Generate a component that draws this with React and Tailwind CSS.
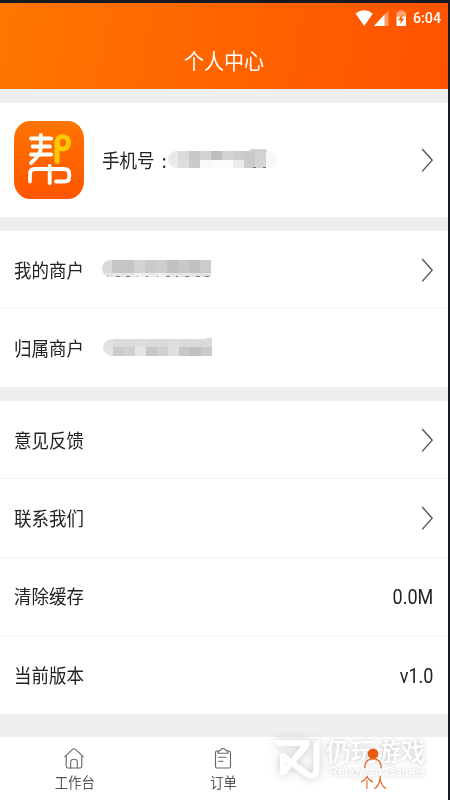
const ORANGE = '#e65a14'

const phoneMask = [
  ['#e9e9e9', '#dadada', '#c8c8c8', '#d3d3d3', '#bfbfbf', '#d2d2d2', '#cdcdcd', '#c9c9c9', '#d4d4d4', '#f8f8f8'],
  ['#ececec', '#dedede', '#cbcbcb', '#f9f9f9', '#fbfbfb', '#fbfbfb', '#ebebeb', '#cccccc', '#d4d4d4', '#f8f8f8'],
]

const merchantMask = [
  ['#dadada', '#c5c5c5', '#c5c5c5', '#d3d3d3', '#cacaca', '#cecece', '#c2c2c2', '#c8c8c8', '#c1c1c1', '#cccccc'],
  ['#e2e2e2', '#e6e6e6', '#e6e6e6', '#eeeeee', '#eaeaea', '#eeeeee', '#e6e6e6', '#e6e6e6', '#e3e3e3', '#e1e1e1'],
]

const ownerMask = [
  ['#e2e2e2', '#dbdbdb', '#dbdbdb', '#dedede', '#dadada', '#dadada', '#dedede', '#dadada', '#dbdbdb', '#d9d9d9'],
  ['#e4e4e4', '#cbcbcb', '#d0d0d0', '#e5e5e5', '#c7c7c7', '#d0d0d0', '#dfdfdf', '#c7c7c7', '#c1c1c1', '#cacaca'],
]

function Mask({ rows, heights, className }) {
  return (
    <div className={`overflow-hidden ${className}`}>
      {rows.map((row, i) => (
        <div key={i} className={`flex ${heights[i]}`}>
          {row.map((color, j) => (
            <span
              key={j}
              className={j === 0 ? 'w-[10px]' : 'w-[11px]'}
              style={{ background: color }}
            />
          ))}
        </div>
      ))}
    </div>
  )
}

// 数字底部露出的小点
function Dots({ className, items }) {
  return (
    <svg className={`absolute h-[2px] w-[110px] ${className}`} viewBox="0 0 110 2">
      {items.map(([x, w]) => (
        <rect key={x} x={x} y="0" width={w} height="1" fill="#555" opacity="0.75" />
      ))}
    </svg>
  )
}

function Chevron() {
  return (
    <svg className="h-[24px] w-[12px]" viewBox="0 0 12 24" fill="none" stroke="#555" strokeWidth="1.4">
      <path d="M1.2 1L11.2 12.2L1.2 23.4" />
    </svg>
  )
}

function Label({ children }) {
  return (
    <span className="w-[88px] shrink-0 origin-left scale-x-[.92] whitespace-nowrap text-[19px] leading-[28px]">
      {children}
    </span>
  )
}

function Row({ label, children, border }) {
  return (
    <div className={`flex h-[78.25px] items-center pl-[14px] pr-[15px] ${border ? 'border-b border-[#f5f5f5]' : ''}`}>
      <Label>{label}</Label>
      {children}
    </div>
  )
}

function Value({ children }) {
  return (
    <span className="ml-auto origin-right scale-x-[.9] pt-[2px] font-[Roboto] text-[20px] leading-[28px]">
      {children}
    </span>
  )
}

function Logo() {
  return (
    <svg className="h-[78px] w-[70px] shrink-0" viewBox="0 0 70 78" fill="none" strokeLinecap="round" strokeLinejoin="round">
      <defs>
        <linearGradient id="logo" x1="0" y1="0" x2="0" y2="1">
          <stop offset="0" stopColor="#ff7400" />
          <stop offset="1" stopColor="#ff5500" />
        </linearGradient>
      </defs>
      <rect width="70" height="78" rx="16" ry="18" fill="url(#logo)" />
      <g stroke="#fff" strokeWidth="3.8">
        <path d="M17 17.5H37.2M18.5 25.5H36M17 33.5H37.2" />
        <path d="M26.8 14V27Q26.8 33.500 17 42" />
        <path d="M16 60.500V53Q16 48 21 48H50Q55.300 48 55.300 53V55.500Q55.300 60.500 50.500 60.500H42" />
        <path d="M35.700 45V62" />
      </g>
      <g stroke="#ffc800" strokeWidth="5">
        <ellipse cx="48.800" cy="21.700" rx="5.800" ry="6.200" />
        <path d="M43 21.700V40.500" />
      </g>
    </svg>
  )
}

function StatusBar() {
  return (
    <div className="flex h-[30px] items-center justify-end pr-[7px]">
      <svg className="h-[17px] w-[52px]" viewBox="0 0 52 17" fill="#fff">
        <path d="M0.500 3.500Q9 -2.800 17.800 3.500L9.200 16Z" />
        <path d="M33.500 0.500V16H19Z" opacity="0.4" />
        <path d="M29.500 4.500V16H19Z" />
        <path d="M41.500 2H44V0.500H48.500V2H51V6.500H41.500Z" opacity="0.45" />
        <path d="M41.500 6.500H51V16H41.500Z" />
        <path d="M47.500 4L43 10.200H45.700L45 14L49.300 8.500H46.700Z" fill="#ff5f00" />
      </svg>
      <span className="ml-[6px] w-[28px] origin-left scale-x-[.92] font-[Roboto] text-[15.5px] font-medium leading-[18px] text-white">
        6:04
      </span>
    </div>
  )
}

function HomeIcon() {
  return (
    <svg className="-ml-px h-[21px] w-[20px]" viewBox="0 0 20 21" fill="none" stroke="#666" strokeWidth="1.100" strokeLinejoin="round" strokeLinecap="round">
      <path d="M0.800 8.700L8.800 1.200Q10 0.200 11.200 1.200L19.200 8.700" />
      <path d="M2.200 8V18.200Q2.200 20 4 20H16Q17.800 20 17.800 18.200V8" />
      <path d="M6.700 20V14Q6.700 11.300 10 11.300Q13.300 11.300 13.300 14V20" />
    </svg>
  )
}

function OrderIcon() {
  return (
    <svg className="-ml-px h-[21px] w-[20px]" viewBox="0 0 20 21" fill="none" stroke="#666" strokeWidth="1.100" strokeLinejoin="round" strokeLinecap="round">
      <path d="M5 3H4Q2.500 3 2.500 4.500V18.500Q2.500 20 4 20H16Q17.500 20 17.500 18.500V4.500Q17.500 3 16 3H15" />
      <path d="M5 5.300Q4.800 2.500 7.500 2.200Q8 0.600 10 0.600Q12 0.600 12.500 2.200Q15.200 2.500 15 5.300Z" />
      <path d="M5.500 9.200H13M5.500 13.200H10" />
    </svg>
  )
}

function UserIcon() {
  return (
    <svg className="h-[21px] w-[20px]" viewBox="0 0 20 21" fill="none">
      <circle cx="10" cy="5.700" r="5.300" fill={ORANGE} />
      <path d="M1.800 20.200C1.800 14 5 10.800 10 10.800C15 10.800 18.200 14 18.200 20.200" stroke={ORANGE} strokeWidth="1.200" />
    </svg>
  )
}

function Tab({ icon, label, active }) {
  return (
    <div className={`flex flex-1 flex-col items-center pt-[11px] ${active ? 'relative z-10 text-[#e65a14]' : 'text-[#555]'}`}>
      {icon}
      <span className="mt-[3px] scale-x-[.92] text-[14.5px] leading-[20px]">{label}</span>
    </div>
  )
}

function Watermark() {
  return (
    <div className="absolute left-[275px] top-[735px] flex text-white">
      <svg
        className="mt-px h-[40px] w-[47px] overflow-visible drop-shadow-[0_0_5px_rgba(0,0,0,0.22)]"
        viewBox="0 0 47 40"
        fill="none"
        stroke="#fff"
        strokeLinejoin="round"
      >
        <path d="M0 1H30Q37 1 33 9L10 35L8 30L26 7H5Q0 6 0 1Z" fill="#fff" stroke="none" />
        <path d="M31 6L9 33" strokeWidth="6" />
        <path d="M8 36V17L31 34.500Q41.500 41 41.500 29V6" strokeWidth="6" />
        <path d="M38.500 7Q39 1 44.500 1V7Z" fill="#fff" stroke="none" />
      </svg>
      <div className="ml-[4px] w-[104px] whitespace-nowrap [text-shadow:0_0_5px_rgba(0,0,0,0.26)]">
        <div className="text-[24.8px] font-medium leading-[25px]">仍玩游戏</div>
        <div className="ml-[3px] mt-[2px] font-['Liberation_Sans'] text-[12.3px] leading-[15px] tracking-[0.1px]">Rengwan Games</div>
      </div>
    </div>
  )
}

export default function App() {
  return (
    <div className="relative h-[800px] w-[450px] overflow-hidden border-r-2 border-t-[3px] border-[#171a22] bg-[#efefef] font-['Noto_Sans_CJK_SC',sans-serif] text-[#222]">
      <header className="h-[86px] bg-linear-[100deg,#ff7600,#ff5200]">
        <StatusBar />
        <h1 className="flex h-[52px] items-center justify-center text-white">
          <span className="scale-x-[.91] text-[22px] leading-[32px]">个人中心</span>
        </h1>
      </header>

      <main>
        <section className="mt-[14px] flex h-[114px] items-center bg-white pl-[14px] pr-[15px]">
          <Logo />
          <div className="ml-[18px] flex items-center">
            <span className="w-[66px] origin-left scale-x-[.92] whitespace-nowrap text-[19px] leading-[28px]">
              手机号<span className="ml-[8px]">:</span>
            </span>
            <div className="relative -mt-[2px]">
              <Mask rows={phoneMask} heights={['h-[9px]', 'h-[8px]']} className="rounded-full" />
              <div className="absolute -top-[2px] left-[81px] h-[3px] w-[18px] rounded-t-sm bg-[#d1d1d1]" />
              <Dots className="left-0 top-[16px]" items={[[85, 3], [95, 3]]} />
            </div>
          </div>
          <div className="ml-auto">
            <Chevron />
          </div>
        </section>

        <section className="mt-[14px] h-[156px] bg-white">
          <Row label="我的商户" border>
            <div className="relative -mt-[3px]">
              <Mask rows={merchantMask} heights={['h-[13px]', 'h-[4px]']} className="rounded-l-full" />
              <Dots
                className="left-0 top-[16px]"
                items={[[5, 1], [14, 4], [24, 4], [35, 1], [44, 2], [55, 1], [64, 4], [74, 2], [83, 4], [94, 4], [103, 4]]}
              />
            </div>
            <div className="ml-auto">
              <Chevron />
            </div>
          </Row>
          <Row label="归属商户">
            <div className="relative -mt-px ml-px">
              <Mask rows={ownerMask} heights={['h-[8px]', 'h-[9px]']} className="rounded-l-full" />
              <div className="absolute -top-px right-0 h-[2px] w-[6px] bg-[#d9d9d9]" />
            </div>
          </Row>
        </section>

        <section className="mt-[14px] h-[313px] bg-white">
          <Row label="意见反馈" border>
            <div className="ml-auto">
              <Chevron />
            </div>
          </Row>
          <Row label="联系我们" border>
            <div className="ml-auto">
              <Chevron />
            </div>
          </Row>
          <Row label="清除缓存" border>
            <Value>0.0M</Value>
          </Row>
          <Row label="当前版本">
            <Value>v1.0</Value>
          </Row>
        </section>
      </main>

      <nav className="mt-[23px] flex h-[63px] bg-white">
        <Tab icon={<HomeIcon />} label="工作台" />
        <Tab icon={<OrderIcon />} label="订单" />
        <Tab icon={<UserIcon />} label="个人" active />
      </nav>

      <Watermark />
    </div>
  )
}
